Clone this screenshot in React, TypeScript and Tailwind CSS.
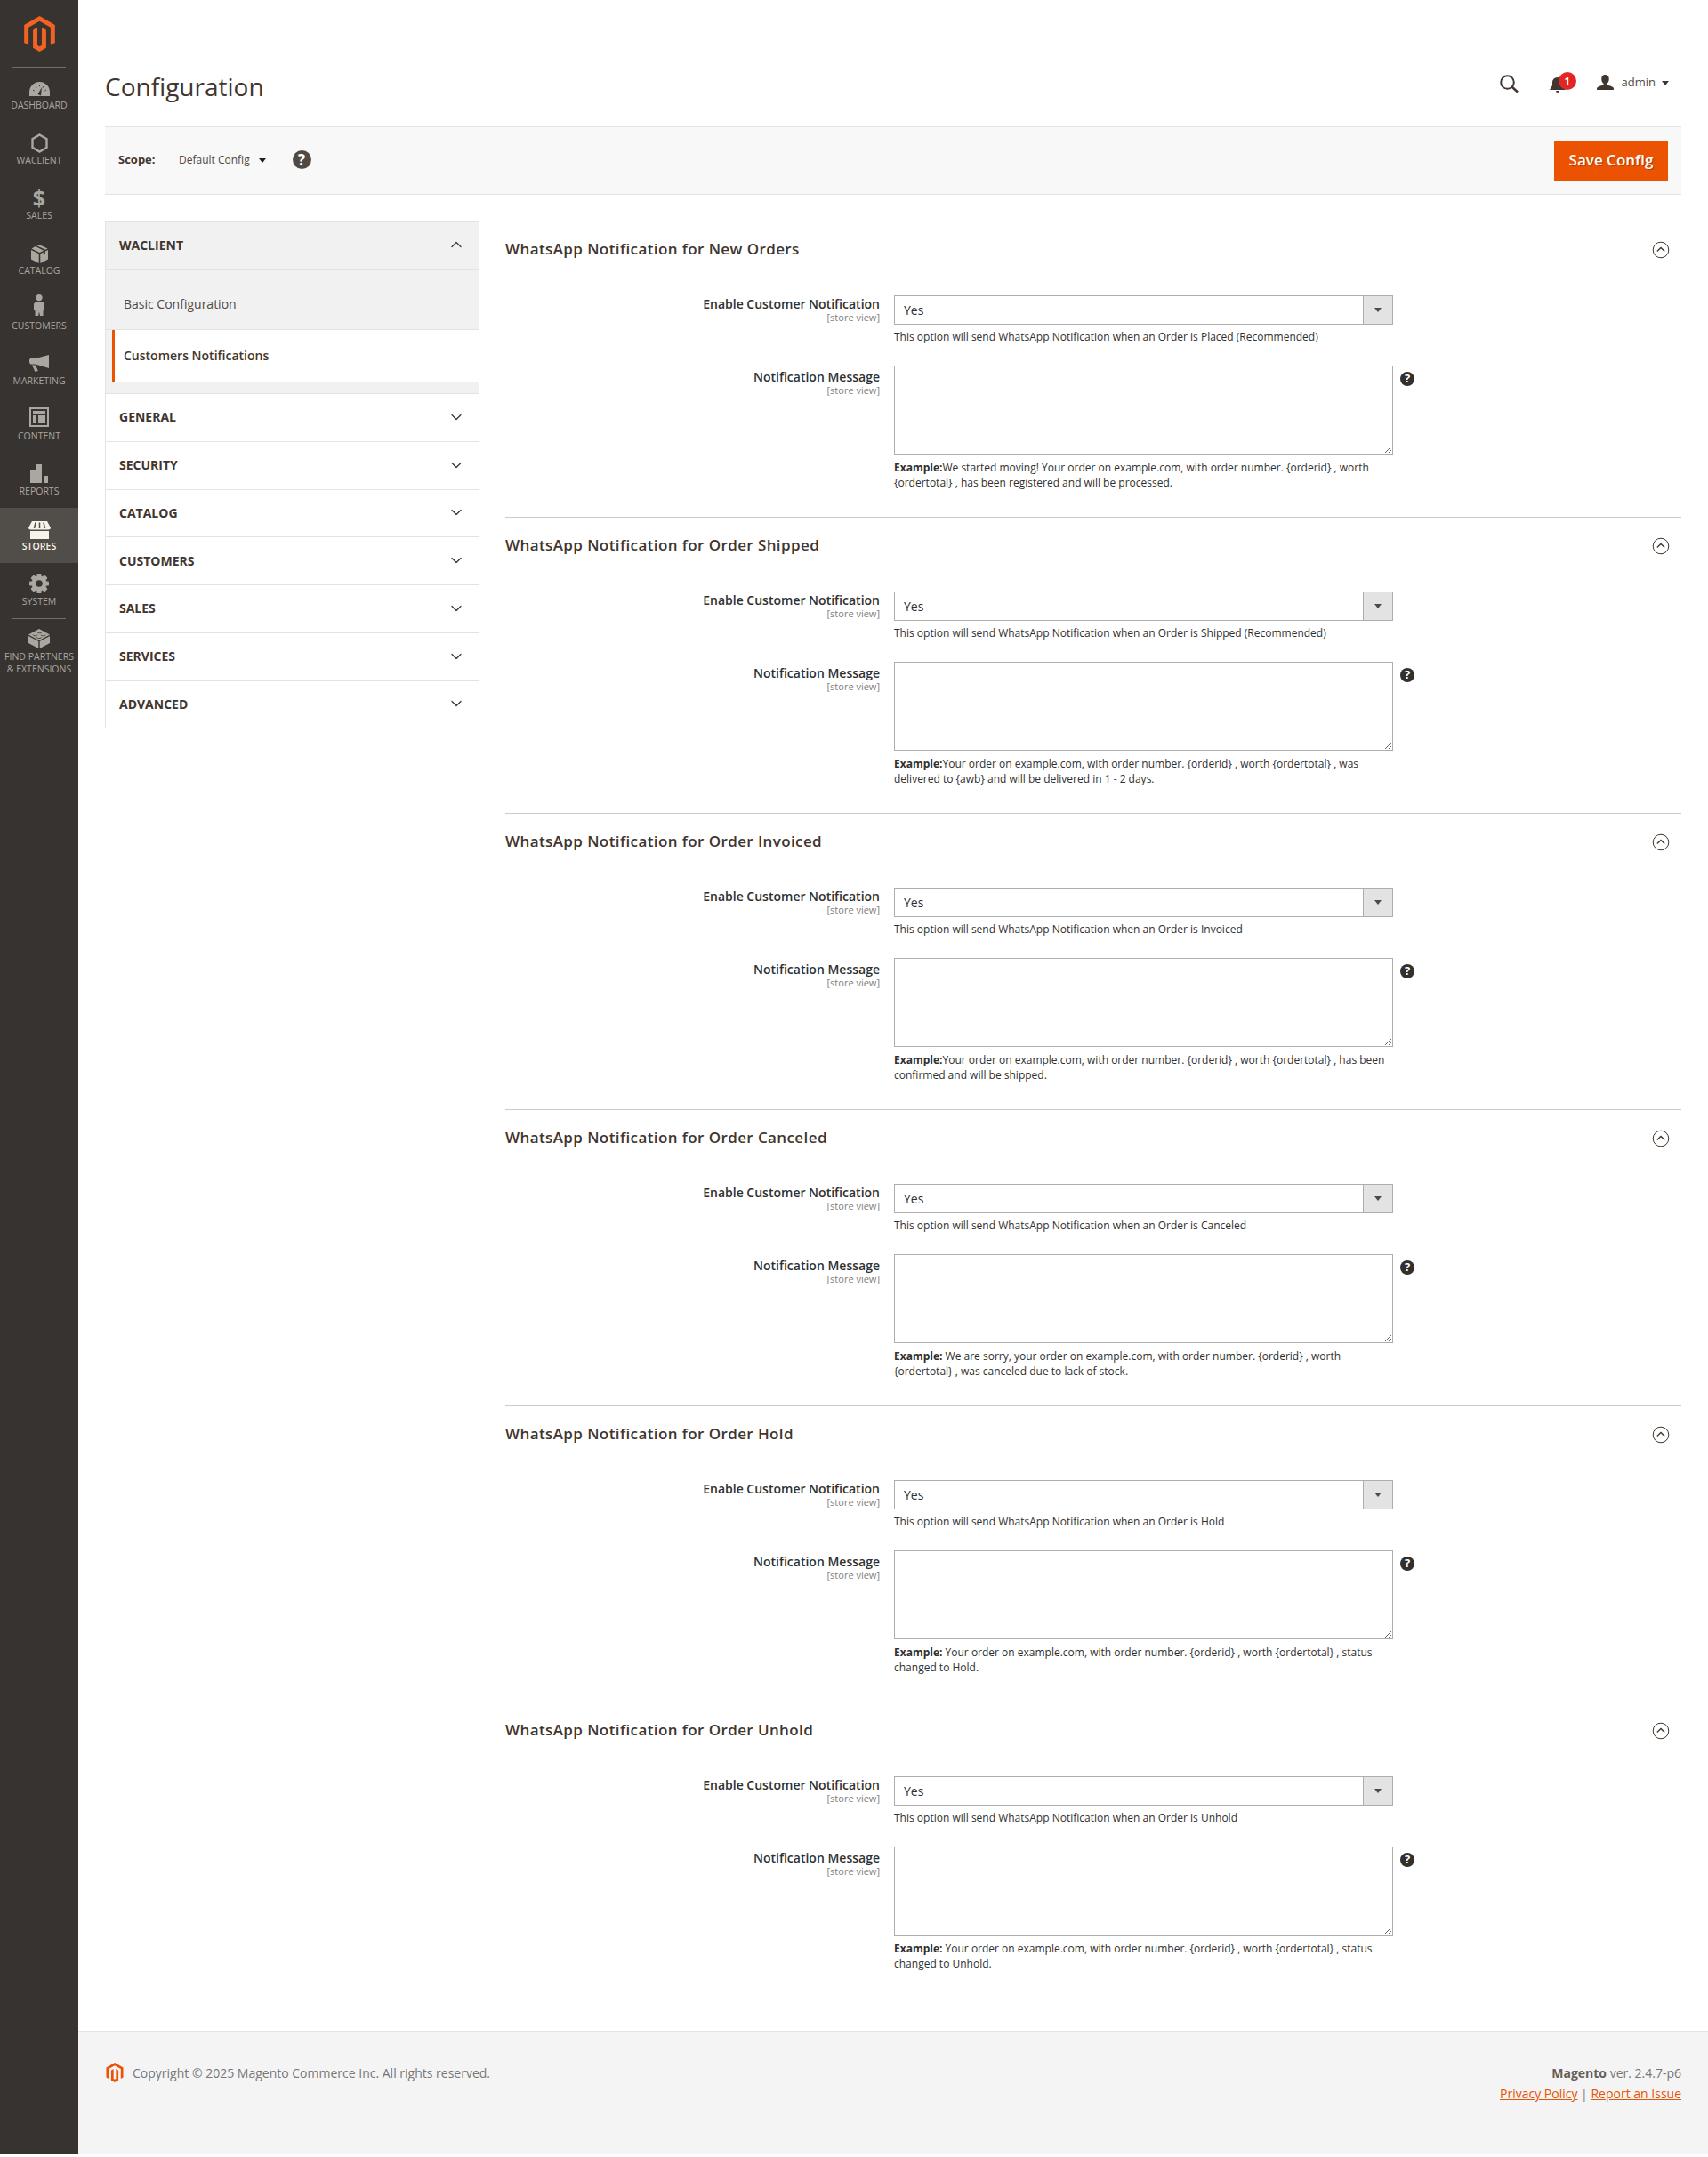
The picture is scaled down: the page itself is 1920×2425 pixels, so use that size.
import type { ReactNode } from 'react';
import { ChevronDown, ChevronUp } from 'lucide-react';

const FONT = "font-['Open_Sans','Noto_Sans',sans-serif]";

const Logo = ({ className }: { className: string }) => (
    <svg viewBox="1.6 0 20.8 24" className={className} fill="currentColor">
        <path d="M12 24l-4.455-2.572v-12l2.97-1.715v12.001L12 20.582l1.485-.858V7.713l2.97 1.715v12L12 24zM22.391 6v12l-2.969 1.714V7.713L12 3.43 4.578 7.713v12.001L1.609 18V6L12 0l10.391 6z" />
    </svg>
);

const HelpDot = ({ className }: { className: string }) => (
    <span className={`flex items-center justify-center rounded-full font-bold text-white ${className}`}>?</span>
);

const GaugeIcon = () => (
    <svg width="23" height="16" viewBox="0 0 23 16" fill="currentColor">
        <path d="M0 16v-4.500a11.500 11.500 0 0 1 23 0V16z" />
        <path d="M9.500 14l4.500-8-1 9.500z" fill="#373330" />
        <path d="M4 9l1.500 1M7 5l1 1.500M11.500 3v2M16 5l-1 1.500M19 9l-1.500 1" stroke="#373330" strokeWidth="1" />
    </svg>
);

const HexIcon = () => (
    <svg width="19" height="22" viewBox="0 0 19 22" fill="none" stroke="currentColor" strokeWidth="2.400">
        <path d="M9.500 1.500l8 4.600v9.800l-8 4.600-8-4.600V6.100z" />
    </svg>
);

const BoxIcon = () => (
    <svg width="19" height="21" viewBox="0 0 19 21" fill="currentColor">
        <path d="M9 0l9.500 4.500-2.500 1.300L6.500 1.200zM4.800 2l9.400 4.700-4.700 2.300L.5 4.500z" />
        <path d="M0 6l8.700 4.300V21L0 16.500zM19 6v10.500L10.300 21V10.300l3.500-1.700v3l2-1v-3z" />
    </svg>
);

const PersonIcon = () => (
    <svg width="12" height="24" viewBox="0 0 12 24" fill="currentColor">
        <circle cx="6" cy="3.600" r="3.600" />
        <path d="M2.500 8h7L12 10.500v7l-1.500 1V24H7l-1-4.500L5 24H1.500v-5.500L0 17.500v-7z" />
    </svg>
);

const MegaphoneIcon = () => (
    <svg width="22" height="19" viewBox="0 0 22 19" fill="currentColor">
        <path d="M22 0v15L7 10.500H1L0 8V5.500l1-1.500h6z" />
        <path d="M3 11.500h4l2.800 6.500-3.300 1z" />
    </svg>
);

const ContentIcon = () => (
    <svg width="22" height="22" viewBox="0 0 22 22" fill="currentColor">
        <path fillRule="evenodd" d="M0 0h22v22H0zM2 2v18h18V2z" />
        <path d="M4 4h14v3H4zM4 9h4v9H4zM10 9h8v9h-8z" />
    </svg>
);

const BarsIcon = () => (
    <svg width="20" height="21" viewBox="0 0 20 21" fill="currentColor">
        <path d="M0 6h6v15H0zM7 0h6v21H7zM15 13h5v8h-5z" />
    </svg>
);

const StoreIcon = () => (
    <svg width="25" height="20" viewBox="0 0 25 20" fill="currentColor">
        <path d="M4 0h17l4 7.500q0 2-2.500 2H2.500Q0 9.500 0 7.500z" />
        <path d="M8 1.500L6.500 8M12.500 1.500V8M17 1.500L18.500 8" stroke="#514d48" strokeWidth="1.500" />
        <path d="M2 11h21v9H2z" />
    </svg>
);

const GearIcon = () => (
    <svg width="24" height="22" viewBox="-12 -11 24 22" fill="currentColor">
        <circle r="8.500" />
        {[0, 45, 90, 135].map(a => (
            <rect key={a} x="-2.600" y="-11" width="5.200" height="22" rx="1" transform={`rotate(${a})`} />
        ))}
        <circle r="3.800" fill="#373330" />
    </svg>
);

const BrickIcon = () => (
    <svg width="24" height="22" viewBox="0 0 24 22" fill="currentColor">
        <path d="M12 0l12 6.500-12 6.500L0 6.500z" />
        <path d="M0 8l11.300 6v8L0 16zM24 8v8l-11.300 6v-8z" />
        <path d="M5 6.500a2.500 1.300 0 0 0 5 0M10 3.500a2.500 1.300 0 0 0 5 0M14 6.500a2.500 1.300 0 0 0 5 0M9.500 9.300a2.500 1.300 0 0 0 5 0" fill="none" stroke="#373330" strokeWidth=".8" />
    </svg>
);

const DollarIcon = () => <span className="block text-[25px] font-bold leading-[25px]">$</span>;

const menu: { label: string; icon: ReactNode; shift?: string; active?: boolean }[] = [
    { label: 'Dashboard', icon: <GaugeIcon />, shift: 'mt-[3px]' },
    { label: 'Waclient', icon: <HexIcon />, shift: 'mt-[1px]' },
    { label: 'Sales', icon: <DollarIcon /> },
    { label: 'Catalog', icon: <BoxIcon />, shift: 'mt-[1px]' },
    { label: 'Customers', icon: <PersonIcon />, shift: 'mb-[7px]' },
    { label: 'Marketing', icon: <MegaphoneIcon /> },
    { label: 'Content', icon: <ContentIcon />, shift: 'mb-[3px]' },
    { label: 'Reports', icon: <BarsIcon />, shift: 'mb-[1px]' },
    { label: 'Stores', icon: <StoreIcon />, shift: 'mt-[3px]', active: true },
    { label: 'System', icon: <GearIcon />, shift: 'mb-[1px]' },
];

const Sidebar = () => (
    <aside className="w-[88px] shrink-0 bg-[#373330] text-[#aaa6a0]">
        <div className="h-[75px] pt-[18px]">
            <Logo className="mx-auto h-[40px] w-[35px] text-[#f26322]" />
        </div>
        <div className="mx-[14px] h-px bg-[#736d68]" />
        <div className="-mt-px">
            {menu.map(item => (
                <div key={item.label} className={`flex h-[62px] flex-col items-center pt-[11px] text-center ${item.active ? 'bg-[#514d48] text-[#f7f3eb]' : ''}`}>
                    <div className="flex h-[25px] items-center justify-center">
                        <div className={item.shift}>{item.icon}</div>
                    </div>
                    <div className={`text-[10.500px] uppercase leading-[14px] ${item.active ? 'font-semibold' : ''}`}>{item.label}</div>
                </div>
            ))}
        </div>
        <div className="mx-[14px] h-px bg-[#736d68]" />
        <div className="flex flex-col items-center pt-[11px] text-center">
            <div className="flex h-[22px] items-center justify-center"><BrickIcon /></div>
            <div className="mt-[2px] text-[10.500px] uppercase leading-[14px]">Find Partners<br />&amp; Extensions</div>
        </div>
    </aside>
);

const TopBar = () => (
    <div className="flex h-[142px] items-start justify-between">
        <h1 className="pt-[75px] text-[28px] leading-[44px] text-[#41362f]">Configuration</h1>
        <div className="flex items-center pt-[81px] pr-[14px] text-[#41362f]">
            <svg width="21" height="20" viewBox="0 0 21 20" fill="none" stroke="currentColor" strokeWidth="2" className="mr-[35px] mt-[1px]">
                <circle cx="8.500" cy="8.500" r="7.300" />
                <path d="M13.500 13.500l6.500 6" strokeWidth="2.500" />
            </svg>
            <div className="relative mr-[23px] h-[24px] w-[30px]">
                <svg width="18" height="17" viewBox="0 0 18 17" fill="currentColor" className="absolute left-0 top-[6px]">
                    <path d="M9 0c4 0 6 3 6 5.500V9l3 5H0l3-5V5.500C3 3 5 0 9 0zM7 15h4a2 2 0 0 1-4 0z" />
                </svg>
                <span className="absolute left-[10px] top-0 flex h-[20px] w-[20px] items-center justify-center rounded-full bg-[#e22626] text-[11px] font-bold text-white">1</span>
            </div>
            <svg width="19" height="17" viewBox="0 0 20 18" fill="currentColor" className="mr-[9px] -mt-[1px]">
                <path d="M10 0c3 0 4.500 2 4.500 5 0 2.500-1 4.500-2.500 5.500v1.500c2 1 6 1.500 8 3.500V18H0v-2.500c2-2 6-2.500 8-3.500v-1.500C6.500 9.500 5.500 7.500 5.500 5 5.500 2 7 0 10 0z" />
            </svg>
            <span className="-mt-[2px] text-[13px] leading-[16px] text-[#514943]">admin</span>
            <span className="ml-[7px] h-0 w-0 border-x-[4px] border-t-[5px] border-x-transparent border-t-[#41362f]" />
        </div>
    </div>
);

const ActionBar = () => (
    <div className="flex h-[77px] items-center justify-between border-y border-[#e3e3e3] bg-[#f8f8f8] pl-[15px] pr-[15px]">
        <div className="-mt-[2px] flex items-center text-[#41362f]">
            <span className="w-[68px] text-[13px] font-bold">Scope:</span>
            <span className="text-[12px] text-[#514943]">Default Config</span>
            <span className="ml-[10px] mt-[2px] h-0 w-0 border-x-[4px] border-t-[5px] border-x-transparent border-t-[#1f1f1f]" />
            <HelpDot className="ml-[30px] h-[21px] w-[21px] bg-[#514943] text-[17px]" />
        </div>
        <button className="h-[45px] w-[128px] bg-[#eb5202] pb-[2px] text-[17px] font-semibold text-white [text-shadow:1px_1px_0_rgba(0,0,0,0.25)]">Save Config</button>
    </div>
);

const navRows = ['General', 'Security', 'Catalog', 'Customers', 'Sales', 'Services', 'Advanced'];

const ConfigNav = () => (
    <div className="w-[421px] shrink-0 text-[#41362f]">
        <div className="border border-[#e3e3e3] bg-[#f1f1f1]">
            <div className="flex h-[53px] items-center justify-between border-b border-[#e3e3e3] pb-[2px] pl-[15px] pr-[15px]">
                <span className="text-[14px] font-bold uppercase">Waclient</span>
                <ChevronUp size={20} strokeWidth={1.500} />
            </div>
            <div className="flex h-[68px] items-center border-b border-[#e3e3e3] pl-[20px] pt-[10px] text-[14px] text-[#514943]">Basic Configuration</div>
            <div className="ml-[7px] -mr-px flex h-[58px] items-center border-l-[3px] border-[#eb5202] bg-white pb-[2px] pl-[10px] text-[14px] font-semibold">Customers Notifications</div>
            <div className="h-[13px] border-t border-[#e3e3e3]" />
        </div>
        {navRows.map(row => (
            <div key={row} className="-mt-px flex h-[54.750px] items-center justify-between border border-[#e3e3e3] bg-white pb-[1px] pl-[15px] pr-[15px]">
                <span className="text-[14px] font-bold uppercase">{row}</span>
                <ChevronDown size={20} strokeWidth={1.500} />
            </div>
        ))}
    </div>
);

const sections = [
    {
        title: 'New Orders',
        note: 'Placed (Recommended)',
        lead: 'Example:',
        text: 'We started moving! Your order on example.com, with order number. {orderid} , worth {ordertotal} , has been registered and will be processed.',
    },
    {
        title: 'Order Shipped',
        note: 'Shipped (Recommended)',
        lead: 'Example:',
        text: 'Your order on example.com, with order number. {orderid} , worth {ordertotal} , was delivered to {awb} and will be delivered in 1 - 2 days.',
    },
    {
        title: 'Order Invoiced',
        note: 'Invoiced',
        lead: 'Example:',
        text: 'Your order on example.com, with order number. {orderid} , worth {ordertotal} , has been confirmed and will be shipped.',
    },
    {
        title: 'Order Canceled',
        note: 'Canceled',
        lead: 'Example: ',
        text: 'We are sorry, your order on example.com, with order number. {orderid} , worth {ordertotal} , was canceled due to lack of stock.',
    },
    {
        title: 'Order Hold',
        note: 'Hold',
        lead: 'Example: ',
        text: 'Your order on example.com, with order number. {orderid} , worth {ordertotal} , status changed to Hold.',
    },
    {
        title: 'Order Unhold',
        note: 'Unhold',
        lead: 'Example: ',
        text: 'Your order on example.com, with order number. {orderid} , worth {ordertotal} , status changed to Unhold.',
    },
];

const FieldLabel = ({ name, className = '' }: { name: string; className?: string }) => (
    <div className={`w-[421px] shrink-0 text-right ${className}`}>
        <div className="text-[14px] font-semibold leading-[19px] text-[#303030]">{name}</div>
        <div className="text-[11px] leading-[11px] text-[#808080]">[store view]</div>
    </div>
);

const Section = ({ s, last }: { s: (typeof sections)[number]; last: boolean }) => (
    <section className={`h-[333px] pt-[19px] text-[#303030] ${last ? '' : 'border-b border-[#cccccc]'}`}>
        <div className="flex h-[24px] items-center justify-between pr-[13px]">
            <h2 className="text-[17px] font-semibold leading-[24px] tracking-[0.4px] text-[#41362f]">WhatsApp Notification for {s.title}</h2>
            <svg width="20" height="20" viewBox="0 0 20 20" fill="none" stroke="#41362f" strokeWidth="1" className="mt-[2px]">
                <circle cx="10" cy="10" r="8.800" />
                <path d="M5.800 11.500L10 7.500l4.200 4" strokeWidth="1.400" />
            </svg>
        </div>
        <div className="mt-[40px] flex">
            <FieldLabel name="Enable Customer Notification" />
            <div className="ml-[16px] w-[561px]">
                <div className="flex h-[33px] border border-[#adadad] bg-white text-[14px] text-[#303030]">
                    <span className="flex flex-1 items-center pl-[10px]">Yes</span>
                    <span className="flex w-[33px] items-center justify-center border-l border-[#adadad] bg-[#e3e3e3]">
                        <span className="h-0 w-0 border-x-[4px] border-t-[5px] border-x-transparent border-t-[#514943]" />
                    </span>
                </div>
                <p className="mt-[5px] text-[12px] leading-[17px]">This option will send WhatsApp Notification when an Order is {s.note}</p>
            </div>
        </div>
        <div className="mt-[24px] flex">
            <FieldLabel name="Notification Message" className="pt-[3px]" />
            <div className="ml-[16px] w-[561px]">
                <textarea readOnly className="block h-[100px] w-full border border-[#adadad] bg-white" />
                <p className="mt-[6px] text-[12px] leading-[17px]"><b className="font-bold">{s.lead}</b>{s.text}</p>
            </div>
            <HelpDot className="ml-[8px] mt-[7px] h-[16px] w-[16px] bg-[#303030] text-[13px]" />
        </div>
    </section>
);

const Footer = () => (
    <footer className="flex h-[139px] items-start justify-between border-t border-[#e3e3e3] bg-[#f4f4f4] pl-[30px] pr-[30px] pt-[35px] text-[14px] text-[#777777]">
        <div className="flex items-center">
            <Logo className="ml-px mr-[10px] h-[22px] w-[20px] text-[#eb5202]" />
            <span>Copyright © 2025 Magento Commerce Inc. All rights reserved.</span>
        </div>
        <div className="text-right leading-[23px]">
            <div><b className="font-bold text-[#676056]">Magento</b> ver. 2.4.7-p6</div>
            <div><a className="text-[#eb5202] underline">Privacy Policy</a> | <a className="text-[#eb5202] underline">Report an Issue</a></div>
        </div>
    </footer>
);

const App = () => (
    <div className={`flex min-h-[2422px] bg-white ${FONT}`}>
        <Sidebar />
        <main className="flex min-w-0 flex-1 flex-col">
            <div className="flex-1 pl-[30px] pr-[30px]">
                <TopBar />
                <ActionBar />
                <div className="mt-[30px] flex">
                    <ConfigNav />
                    <div className="ml-[29px] flex-1">
                        {sections.map((s, i) => (
                            <Section key={s.title} s={s} last={i === sections.length - 1} />
                        ))}
                    </div>
                </div>
            </div>
            <Footer />
        </main>
    </div>
);

export default App;
